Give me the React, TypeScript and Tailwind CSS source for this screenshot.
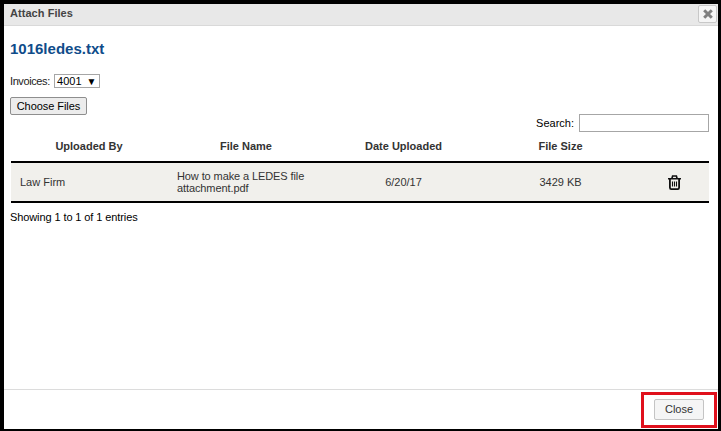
const headers = ['Uploaded By', 'File Name', 'Date Uploaded', 'File Size', ''];

// fa-trash-o style can, heavier than the stock icons
function TrashIcon() {
  return (
    <svg width="13" height="15" viewBox="0 0 13 15" fill="none" stroke="currentColor">
      <path d="M0 3.75H13" strokeWidth="1.5" />
      <path d="M3.9 3.5L4.6 1H8.4L9.1 3.5" strokeWidth="1.6" />
      <path d="M1.9 4V12.5C1.9 13.5 2.4 14.1 3.2 14.1H9.8C10.6 14.1 11.1 13.5 11.1 12.5V4" strokeWidth="1.8" />
      <path d="M4.5 6.5V11.5M6.5 6.5V11.5M8.5 6.5V11.5" strokeWidth="1.1" />
    </svg>
  );
}

export default function App() {
  return (
    <div className="relative h-[431px] w-[721px] overflow-hidden bg-black pt-[4px] pb-[2px] pl-[4px] pr-[3px] font-['Liberation_Sans',Arial,sans-serif] text-[11px] text-[#222]">
      <div className="flex h-full flex-col bg-white">
        {/* title bar */}
        <div className="flex h-[22px] shrink-0 items-center justify-between border-b border-[#d9d9d9] bg-[#e8e8e8] pl-[6px] pr-[1px]">
          <span className="-translate-y-[1px] text-[11px] font-bold tracking-[0.05px] text-[#444]">Attach Files</span>
          <button className="flex h-[18px] w-[19px] -translate-y-[1px] items-center justify-center rounded-[2px] border border-[#c8c8c8] bg-[#f5f5f5] text-[#808080]">
            <svg width="10" height="10" viewBox="0 0 10 10" stroke="currentColor" strokeWidth="3">
              <path d="M1.2 1.2L8.8 8.8M8.8 1.2L1.2 8.8" />
            </svg>
          </button>
        </div>

        {/* body */}
        <div className="flex-1 px-[6px]">
          <h1 className="mt-[13px] text-[15px] leading-[20px] font-bold text-[#0f4c8a]">1016ledes.txt</h1>
          <div className="mt-[15px] flex h-[14px] items-center gap-[4px]">
            <span className="tracking-[-0.4px]">Invoices:</span>
            <div className="flex h-[14px] w-[46px] items-center justify-center gap-[5px] border border-[#a6a6a6] text-black">
              <span>4001</span>
              <span className="text-[10px]">▼</span>
            </div>
          </div>
          <button className="mt-[9px] block h-[18px] w-[77px] rounded-[2px] border border-[#8e8e8e] bg-[#ececec] text-center text-[11px] leading-[16px] tracking-[-0.05px] text-black">
            Choose Files
          </button>
          <div className="-mt-[1px] flex items-center justify-end gap-[5px] pr-[3px]">
            <span className="text-black">Search:</span>
            <input className="h-[18px] w-[130px] border border-[#a6a6a6] bg-white outline-none" />
          </div>

          <table className="mt-[3px] ml-[1px] w-[698px] table-fixed border-collapse">
            <colgroup>
              <col className="w-[156px]" />
              <col className="w-[158px]" />
              <col className="w-[157px]" />
              <col className="w-[157px]" />
              <col />
            </colgroup>
            <thead>
              <tr className="h-[27px] border-b-[2px] border-black">
                {headers.map((h) => (
                  <th key={h} className="pb-[4px] text-center text-[11px] font-bold text-[#333]">{h}</th>
                ))}
              </tr>
            </thead>
            <tbody>
              <tr className="h-[40px] border-b-[2px] border-black bg-[#f1f0ec] text-[#333]">
                <td className="pl-[9px]">Law Firm</td>
                <td className="pl-[10px] leading-[12px] tracking-[-0.1px]">How to make a LEDES file attachment.pdf</td>
                <td className="text-center">6/20/17</td>
                <td className="text-center">3429 KB</td>
                <td>
                  <div className="flex justify-center text-[#111]">
                    <TrashIcon />
                  </div>
                </td>
              </tr>
            </tbody>
          </table>
          <div className="mt-[6px] tracking-[-0.1px] text-black">Showing 1 to 1 of 1 entries</div>
        </div>

        {/* footer */}
        <div className="flex h-[40px] shrink-0 items-start justify-end border-t border-[#dcdcdc] pt-[9px] pr-[14px]">
          <button className="h-[21px] w-[50px] rounded-[2px] border border-[#c4c4c4] bg-[#f5f5f5] text-[11px] text-[#333]">
            Close
          </button>
        </div>
      </div>

      {/* red highlight annotation */}
      <div className="absolute top-[392px] left-[641px] h-[36px] w-[76px] border-[3px] border-[#e0101c]" />
    </div>
  );
}
